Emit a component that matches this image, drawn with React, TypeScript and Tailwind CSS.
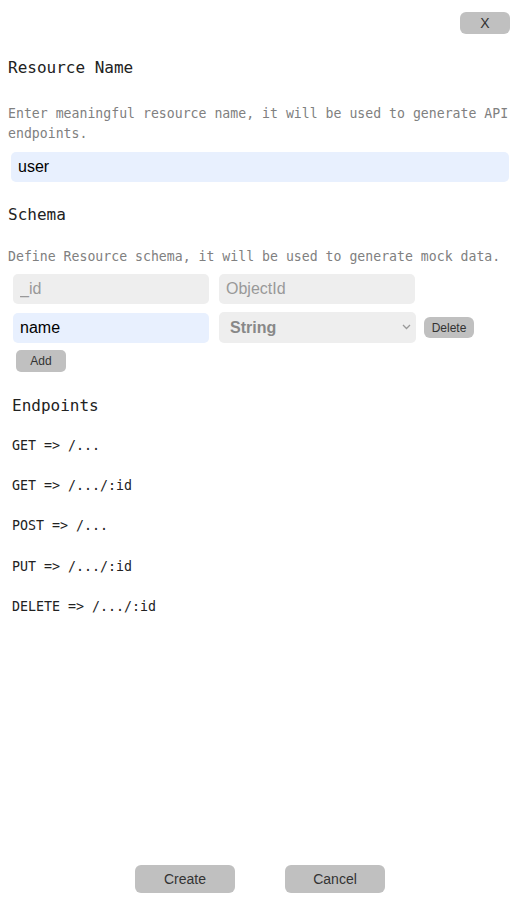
import { useState } from "react";

const mono = "font-['DejaVu_Sans_Mono',_'Liberation_Mono',_monospace]";
const sans = "font-['Liberation_Sans',_Arial,_sans-serif]";

const endpoints = [
  "GET => /...",
  "GET => /.../:id",
  "POST => /...",
  "PUT => /.../:id",
  "DELETE => /.../:id",
];

export default function App() {
  const [name, setName] = useState("user");
  const [field, setField] = useState("name");

  return (
    <div className={`flex h-[908px] w-[520px] flex-col bg-white ${sans}`}>
      <div className="flex justify-end px-[10px] pt-[12px]">
        <button className="h-[22px] w-[50px] rounded-[6px] bg-[#c0c0c0] text-[14px] text-[#333]">
          X
        </button>
      </div>

      <h2 className={`mt-[24px] pl-[8px] text-[16px] leading-[20px] text-[#222] ${mono}`}>
        Resource Name
      </h2>
      <p className={`mt-[26px] pl-[8px] pr-[6px] text-[13.2px] leading-[20px] text-[#808080] ${mono}`}>
        Enter meaningful resource name, it will be used to generate API endpoints.
      </p>
      <div className="px-[11px] pt-[8px]">
        <input
          value={name}
          onChange={(e) => setName(e.target.value)}
          className="h-[30px] w-full rounded-[5px] bg-[#e8f0fe] px-[7px] text-[16px] text-black outline-none"
        />
      </div>

      <h2 className={`mt-[23px] pl-[8px] text-[16px] leading-[20px] text-[#222] ${mono}`}>
        Schema
      </h2>
      <p className={`mt-[22px] pl-[8px] text-[13.2px] leading-[20px] text-[#808080] ${mono}`}>
        Define Resource schema, it will be used to generate mock data.
      </p>

      <div className="mt-[7px] flex flex-col gap-[8px] pl-[13px]">
        <div className="flex gap-[10px]">
          <input
            disabled
            value="_id"
            className="h-[30px] w-[196px] rounded-[5px] bg-[#eeeeee] px-[7px] text-[16px] text-[#999]"
          />
          <input
            disabled
            value="ObjectId"
            className="h-[30px] w-[196px] rounded-[5px] bg-[#eeeeee] px-[7px] text-[16px] text-[#999]"
          />
        </div>
        <div className="flex items-center gap-[10px]">
          <input
            value={field}
            onChange={(e) => setField(e.target.value)}
            className="h-[30px] w-[196px] rounded-[5px] bg-[#e8f0fe] px-[7px] text-[16px] text-black outline-none"
          />
          <div className="relative h-[31px] w-[197px]">
            <select className="h-full w-full appearance-none rounded-[5px] bg-[#eeeeee] px-[11px] text-[16px] font-bold text-[#888] outline-none">
              <option>String</option>
              <option>Number</option>
              <option>Boolean</option>
            </select>
            <svg
              className="pointer-events-none absolute right-[5px] top-[12px]"
              width="9"
              height="6"
              viewBox="0 0 9 6"
              fill="none"
              stroke="#999"
              strokeWidth="1.3"
            >
              <path d="M1 1l3.5 3.5L8 1" />
            </svg>
          </div>
          <button className="-ml-[2px] h-[21px] w-[50px] rounded-[6px] bg-[#c0c0c0] text-[12px] text-[#333]">
            Delete
          </button>
        </div>
      </div>
      <div className="mt-[5px] pl-[16px]">
        <button className="h-[22px] w-[50px] rounded-[5px] bg-[#c0c0c0] text-[12px] text-[#333]">
          Add
        </button>
      </div>

      <h2 className={`mt-[24px] pl-[12px] text-[16px] leading-[20px] text-[#222] ${mono}`}>
        Endpoints
      </h2>
      <ul className={`mt-[10px] flex flex-col pl-[12px] text-[13.3px] text-[#222] ${mono}`}>
        {endpoints.map((e) => (
          <li key={e} className="h-[40.2px] leading-[40px]">
            {e}
          </li>
        ))}
      </ul>

      <div className="mt-auto flex justify-center gap-[50px] pb-[15px]">
        <button className="h-[28px] w-[100px] rounded-[6px] bg-[#c0c0c0] text-[14px] text-[#333]">
          Create
        </button>
        <button className="h-[28px] w-[100px] rounded-[6px] bg-[#c0c0c0] text-[14px] text-[#333]">
          Cancel
        </button>
      </div>
    </div>
  );
}
